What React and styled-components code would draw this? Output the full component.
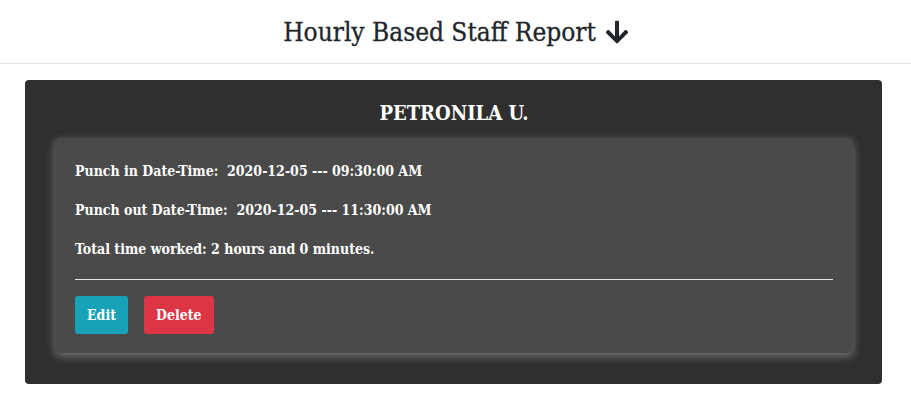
import React from "react";
import styled, { createGlobalStyle } from "styled-components";
import { FaArrowDown } from "react-icons/fa";

const GlobalStyle = createGlobalStyle`
  body {
    margin: 0;
    background: #fff;
    font-family: "DejaVu Serif Condensed", "DejaVu Serif", "Liberation Serif", serif;
    color: #212529;
  }
`;

const Header = styled.header`
  height: 63px;
  border-bottom: 1px solid #e3e3e3;
  display: flex;
  align-items: center;
  justify-content: center;
`;

const Title = styled.h1`
  margin: 0 0 0 2px;
  font-size: 26px;
  font-weight: 400;
  display: flex;
  align-items: center;
  gap: 8px;
  color: #212529;
  -webkit-text-stroke: 0.3px #212529;
`;

const Main = styled.main`
  padding: 16px 29px 0 25px;
`;

const StaffCard = styled.section`
  background: #2f2f2f;
  border-radius: 4px;
  padding: 21px 29px 31px 30px;
`;

const StaffName = styled.h2`
  margin: 0 0 13px;
  text-align: center;
  color: #fff;
  font-size: 20px;
  font-weight: 700;
  line-height: 24px;
`;

const Entry = styled.div`
  background: #4a4a4a;
  border-radius: 5px;
  padding: 24px 20px 19px;
  box-shadow: 0 3px 10px rgba(255, 255, 255, 0.35);
  color: #fff;
`;

const Line = styled.p`
  margin: 0 0 21px;
  font-size: 14px;
  font-weight: 700;
  line-height: 18px;
`;

const Divider = styled.hr`
  border: 0;
  border-top: 1px solid #e8e8e8;
  margin: 4px 0 16px;
`;

const Actions = styled.div`
  display: flex;
  gap: 16px;
`;

const Button = styled.button`
  font-family: inherit;
  font-size: 14px;
  font-weight: 700;
  color: #fff;
  border: 0;
  border-radius: 3px;
  height: 38px;
  padding: 0 12px;
  background: ${(p) => (p.danger ? "#dc3545" : "#17a2b8")};
`;

const App = () => (
  <>
    <GlobalStyle />
    <Header>
      <Title>
        Hourly Based Staff Report <FaArrowDown size={26} />
      </Title>
    </Header>
    <Main>
      <StaffCard>
        <StaffName>PETRONILA U.</StaffName>
        <Entry>
          <Line>Punch in Date-Time:&nbsp; 2020-12-05 --- 09:30:00 AM</Line>
          <Line>Punch out Date-Time:&nbsp; 2020-12-05 --- 11:30:00 AM</Line>
          <Line>Total time worked: 2 hours and 0 minutes.</Line>
          <Divider />
          <Actions>
            <Button>Edit</Button>
            <Button danger>Delete</Button>
          </Actions>
        </Entry>
      </StaffCard>
    </Main>
  </>
);

export default App;
